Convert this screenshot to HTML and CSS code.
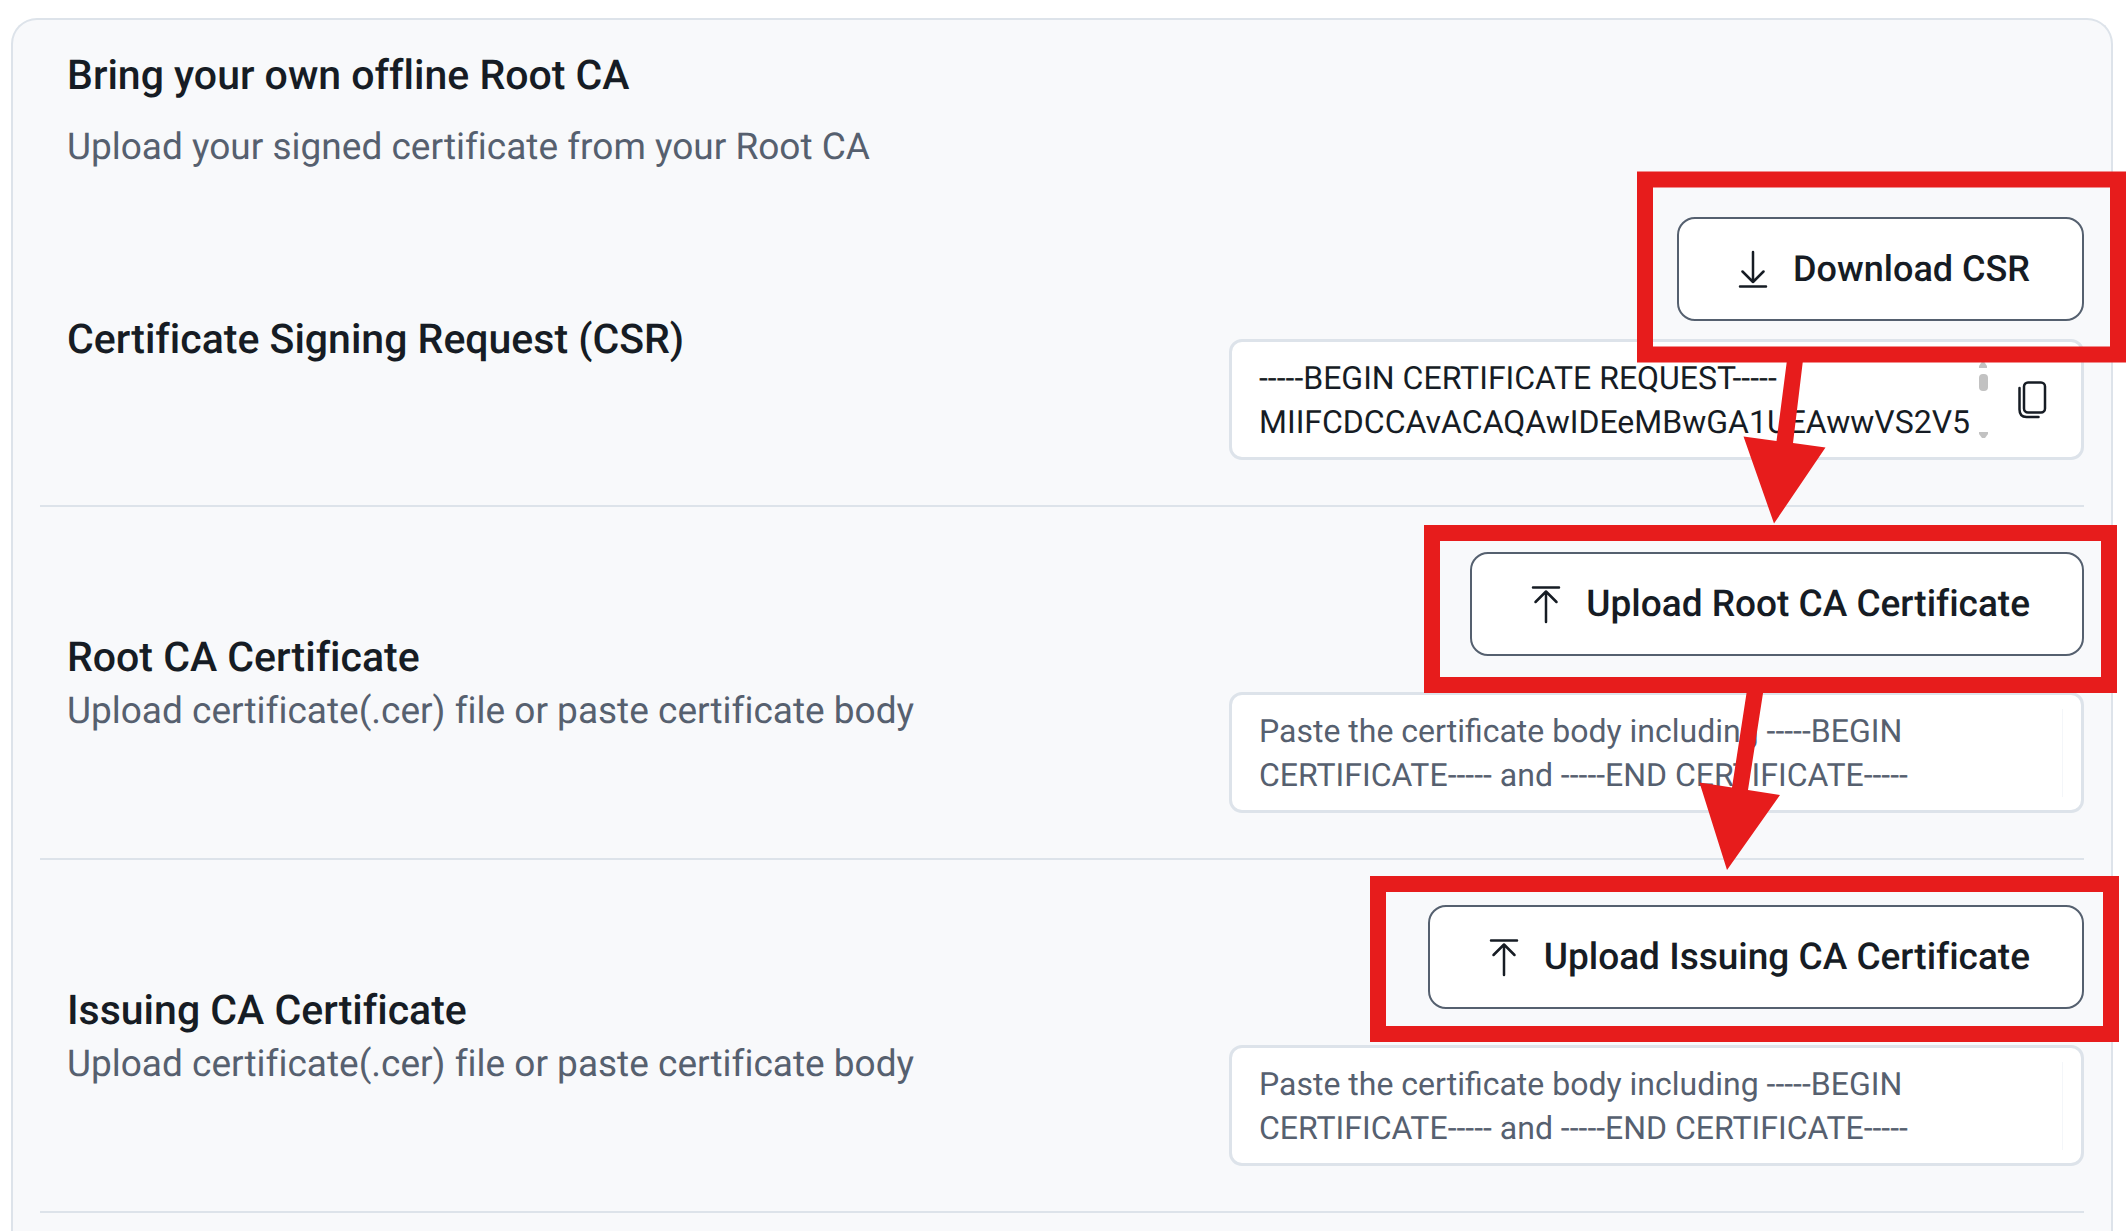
FILE: index.html
```html
<!DOCTYPE html>
<html lang="en">
<head>
    <meta charset="UTF-8">
    <meta name="viewport" content="width=device-width, initial-scale=1.0">
    <title>Bring your own offline Root CA</title>
    <link rel="stylesheet" href="styles.css">
</head>
<body>
    <main class="card">
        <header class="card-header">
            <h1 class="title">Bring your own offline Root CA</h1>
            <p class="subtitle">Upload your signed certificate from your Root CA</p>
        </header>

        <section class="row">
            <div class="row-text">
                <label class="title" for="csr">Certificate Signing Request (CSR)</label>
            </div>
            <div class="row-actions compact">
                <button class="btn" type="button">
                    <svg class="btn-icon" viewBox="0 0 44 44" aria-hidden="true">
                        <path d="M22 5v30M11.500 24.500L22 35l10.500-10.500M9 39.500h26"/>
                    </svg>
                    Download CSR
                </button>
                <div class="field">
                    <textarea id="csr" class="field-input" rows="2" readonly>-----BEGIN CERTIFICATE REQUEST-----
MIIFCDCCAvACAQAwIDEeMBwGA1UEAwwVS2V5</textarea>
                    <svg class="scrollbar" viewBox="0 0 10 88" aria-hidden="true">
                        <path d="M5 4l4 6v2H1v-2z"/>
                        <rect x="1" y="18" width="9" height="17" rx="4"/>
                        <path d="M1 76h9v2l-3 4H4l-3-4z"/>
                    </svg>
                    <button class="copy-btn" type="button" aria-label="Copy CSR">
                        <svg viewBox="0 0 30 38" aria-hidden="true">
                            <rect x="7" y="1.500" width="21" height="30" rx="4"/>
                            <path d="M2.500 7v21.500q0 7.500 7 7.500h12"/>
                        </svg>
                    </button>
                </div>
            </div>
        </section>

        <section class="row">
            <div class="row-text">
                <label class="title" for="rootCert">Root CA Certificate</label>
                <p class="subtitle">Upload certificate(.cer) file or paste certificate body</p>
            </div>
            <div class="row-actions">
                <button class="btn btn-upload" type="button">
                    <svg class="btn-icon" viewBox="0 0 44 44" aria-hidden="true">
                        <path d="M22 40V9.500M11.500 20L22 9.500 32.500 20M9 5.500h26"/>
                    </svg>
                    Upload Root CA Certificate
                </button>
                <div class="field">
                    <textarea id="rootCert" class="field-input lined" rows="2" placeholder="Paste the certificate body including -----BEGIN CERTIFICATE----- and -----END CERTIFICATE-----"></textarea>
                </div>
            </div>
        </section>

        <section class="row">
            <div class="row-text">
                <label class="title" for="issuingCert">Issuing CA Certificate</label>
                <p class="subtitle">Upload certificate(.cer) file or paste certificate body</p>
            </div>
            <div class="row-actions">
                <button class="btn btn-upload" type="button">
                    <svg class="btn-icon" viewBox="0 0 44 44" aria-hidden="true">
                        <path d="M22 40V9.500M11.500 20L22 9.500 32.500 20M9 5.500h26"/>
                    </svg>
                    Upload Issuing CA Certificate
                </button>
                <div class="field">
                    <textarea id="issuingCert" class="field-input lined" rows="2" placeholder="Paste the certificate body including -----BEGIN CERTIFICATE----- and -----END CERTIFICATE-----"></textarea>
                </div>
            </div>
        </section>
    </main>

    <!-- highlight boxes and arrows showing the order of the steps -->
    <svg class="steps" viewBox="1327 0 800 1231" aria-hidden="true">
        <rect x="1645" y="179.500" width="473" height="175"/>
        <rect x="1432" y="533" width="677" height="152"/>
        <rect x="1378" y="884" width="733" height="150"/>
        <path d="M1787 360h16l-10 83 32.500 4.500L1774 523.500 1743.500 436.500l33 4.500z"/>
        <path d="M1747 690h16.500L1748 790l32 5-53 75-27.500-87.500 32.500 5z"/>
    </svg>
</body>
</html>
```

FILE: styles.css
```css
* {
    box-sizing: border-box;
}
body {
    position: relative;
    margin: 0;
    padding: 18px 14px 0 11px;
    background-color: white;
    color: #161c24;
    font-family: Roboto, "Liberation Sans", sans-serif;
    text-rendering: geometricPrecision;
}
.card {
    min-height: calc(100vh - 18px);
    padding: 0 27px;
    background-color: #f8f9fb;
    border: 2px solid #dde3ea;
    border-bottom: none;
    border-radius: 26px 26px 0 0;
}
.card-header {
    display: flex;
    flex-direction: column;
    gap: 22px;
    padding: 30px 27px 0;
}
.title {
    margin: 0;
    font-size: 41px;
    font-weight: 500;
    font-variant-ligatures: none;
    line-height: 52px;
}
.subtitle {
    margin: 0;
    color: #56606f;
    font-size: 37px;
    font-variant-ligatures: none;
    line-height: 48px;
}
.row {
    display: flex;
    align-items: center;
    justify-content: space-between;
    padding: 45px 0;
    border-bottom: 2px solid #dde3ea;
}
.row-text {
    display: flex;
    flex-direction: column;
    gap: 4px;
    padding: 2px 0 0 27px;
}
.row-actions {
    display: flex;
    flex-direction: column;
    align-items: flex-end;
    gap: 36px;
    width: 855px;
}
.row-actions.compact {
    gap: 18px;
}
.btn {
    display: flex;
    align-items: center;
    gap: 18px;
    height: 104px;
    padding: 0 52px;
    background-color: white;
    color: #161c24;
    border: 2px solid #55606f;
    border-radius: 18px;
    font-family: inherit;
    font-size: 36px;
    font-weight: 500;
    font-variant-ligatures: none;
    text-rendering: inherit;
    cursor: pointer;
}
.btn-upload {
    font-size: 37px;
}
.btn-icon {
    width: 44px;
    height: 44px;
    fill: none;
    stroke: #161c24;
    stroke-width: 2.5;
    stroke-linecap: round;
    stroke-linejoin: round;
}
.field {
    display: flex;
    align-items: center;
    width: 100%;
    height: 121px;
    padding: 0 18px 0 27px;
    background-color: white;
    border: 3px solid #dde3ea;
    border-radius: 13px;
}
.field-input {
    flex: 1;
    min-width: 0;
    height: 88px;
    padding: 0;
    background: none;
    color: #161c24;
    border: none;
    outline: none;
    resize: none;
    overflow: hidden;
    font-family: inherit;
    font-size: 32px;
    line-height: 44px;
    text-rendering: inherit;
}
.field-input::placeholder {
    color: #56606f;
    opacity: 1;
}
.field-input.lined {
    padding-right: 90px;
    border-right: 1px solid #f4f6f9;
}
.scrollbar {
    width: 10px;
    height: 88px;
    fill: #c2c2c2;
}
.copy-btn {
    width: 30px;
    height: 38px;
    margin: 0 16px 0 29px;
    padding: 0;
    background: none;
    border: none;
    cursor: pointer;
}
.copy-btn svg {
    display: block;
    width: 30px;
    height: 38px;
    fill: none;
    stroke: #161c24;
    stroke-width: 2.5;
    stroke-linecap: round;
}
.steps {
    position: absolute;
    top: 0;
    right: 0;
    width: 800px;
    height: 1231px;
    fill: #e71c1c;
    pointer-events: none;
}
.steps rect {
    fill: none;
    stroke: #e71c1c;
    stroke-width: 16;
}
```
